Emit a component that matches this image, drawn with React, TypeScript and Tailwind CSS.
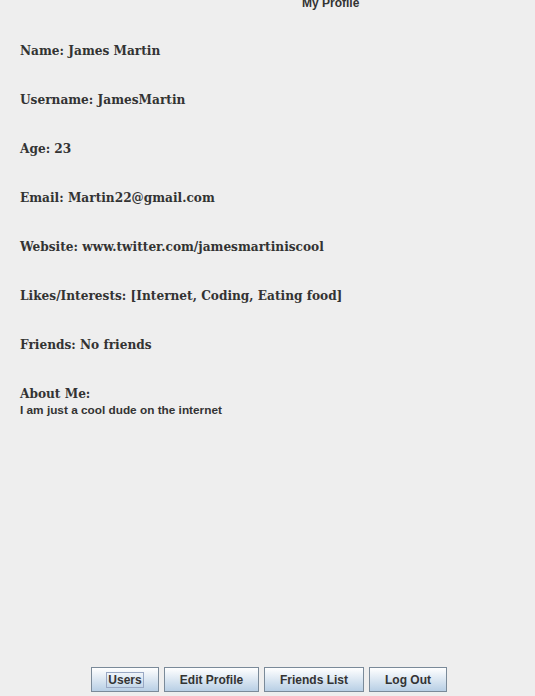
const rows = [
  "Name: James Martin",
  "Username: JamesMartin",
  "Age: 23",
  "Email: Martin22@gmail.com",
  "Website: www.twitter.com/jamesmartiniscool",
  "Likes/Interests: [Internet, Coding, Eating food]",
  "Friends: No friends",
];

const buttons = [
  { label: "Users", w: "w-[68px]" },
  { label: "Edit Profile", w: "w-[95px]" },
  { label: "Friends List", w: "w-[100px]" },
  { label: "Log Out", w: "w-[78px]" },
];

export default function App() {
  return (
    <div className="w-[535px] h-[696px] bg-[#eeeeee] flex flex-col overflow-hidden text-[#333333]">
      <div className="h-[10px] overflow-hidden">
        <p className="-mt-[5px] pl-[302px] font-['Liberation_Sans',sans-serif] font-bold text-[12px] leading-[16px]">
          My Profile
        </p>
      </div>
      <div className="flex flex-col gap-[30px] pl-[20px] pt-[31px] font-['DejaVu_Serif_Condensed','Liberation_Serif',serif] font-bold text-[13.5px] leading-[19px]">
        {rows.map((r) => (
          <p key={r}>{r}</p>
        ))}
        <div>
          <p>About Me:</p>
          <p className="font-['Liberation_Sans',sans-serif] text-[11.8px] leading-[14px]">
            I am just a cool dude on the internet
          </p>
        </div>
      </div>
      <div className="mt-auto mb-[4px] flex gap-[5px] pl-[91px]">
        {buttons.map((b, i) => (
          <button
            key={b.label}
            className={`${b.w} h-[25px] border border-[#7a8a99] bg-gradient-to-b from-[#ffffff] to-[#b8cfe5] font-['Liberation_Sans',sans-serif] font-bold text-[12px] text-[#333333]`}
          >
            <span className={i === 0 ? "px-[1px] outline outline-1 outline-[#99a8c4]" : ""}>{b.label}</span>
          </button>
        ))}
      </div>
    </div>
  );
}
